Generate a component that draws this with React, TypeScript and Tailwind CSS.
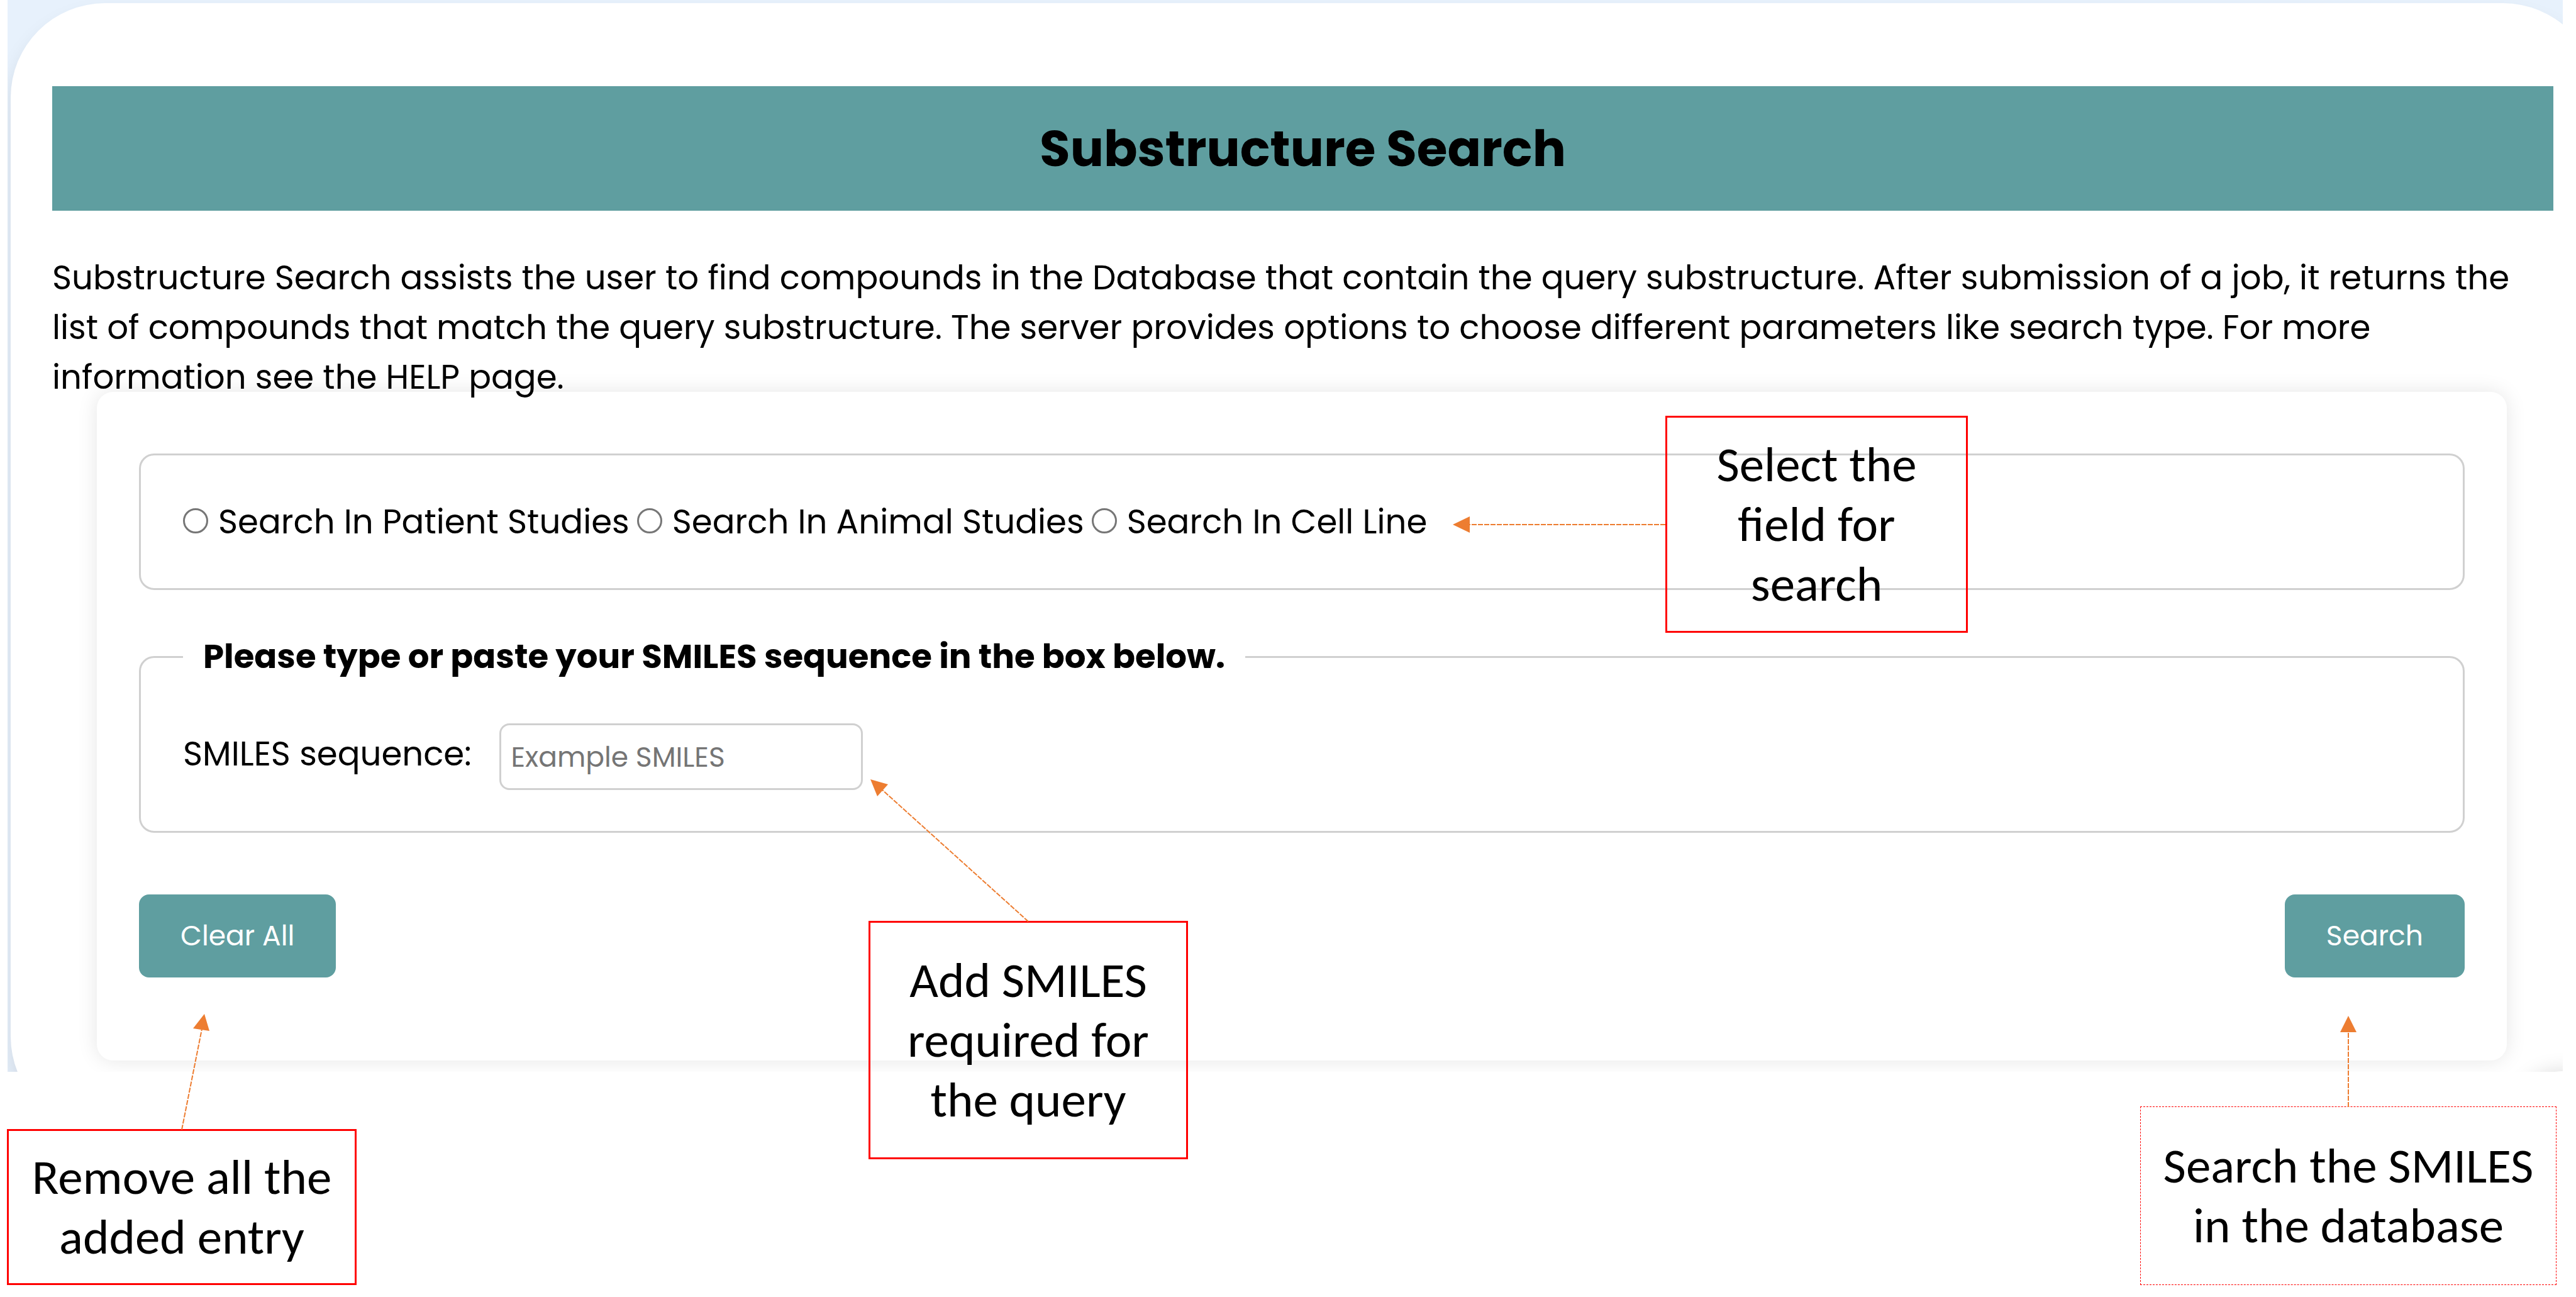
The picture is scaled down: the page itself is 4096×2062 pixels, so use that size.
import type { ReactNode } from "react";

type Point = [number, number];

function Arrow({ className, width, height, from, to, head }: {
  className: string;
  width: number;
  height: number;
  from: Point;
  to: Point;
  head: string;
}) {
  return (
    <svg
      className={`absolute overflow-visible ${className}`}
      width={width}
      height={height}
      viewBox={`0 0 ${width} ${height}`}
      aria-hidden="true"
    >
      <line x1={from[0]} y1={from[1]} x2={to[0]} y2={to[1]} stroke="#ed7d31" strokeWidth="2" strokeDasharray="8 2" />
      <polygon points={head} fill="#ed7d31" />
    </svg>
  );
}

function Note({ className, children }: { className: string; children: ReactNode }) {
  return (
    <div
      className={`text-center font-['Carlito','Calibri','Noto_Sans',sans-serif] text-[79px] leading-[95px] text-black ${className}`}
    >
      {children}
    </div>
  );
}

function Choice({ id, label }: { id: string; label: string }) {
  return (
    <div className="flex items-center gap-4">
      <input
        type="radio"
        id={id}
        name="field"
        className="mb-1 size-10 shrink-0 appearance-none rounded-full border-3 border-[#767676] bg-white checked:border-[12px]"
      />
      <label htmlFor={id}>{label}</label>
    </div>
  );
}

export default function App() {
  return (
    <div className="relative min-h-screen w-full overflow-hidden bg-white font-['Poppins','Inter',sans-serif] text-black">
      <main className="relative mr-[21px] ml-3 overflow-hidden bg-[#e7f1fc] pt-[5px] pl-[5px]">
        <div className="-mr-[55px] -mb-[94px] rounded-[150px] bg-white pt-[132px] pr-[70px] pb-[112px] pl-[66px] shadow-[0_20px_33px_rgba(0,0,0,0.1)]">
          <h1 className="bg-[#5f9ea0] pt-[51px] pb-[49px] text-center text-[79px] leading-[98px] font-bold">
            Substructure Search
          </h1>
          <p className="mt-[67px] text-[53px] leading-[79px]">
            Substructure Search assists the user to find compounds in the Database that contain the query
            substructure. After submission of a job, it returns the list of compounds that match the query
            substructure. The server provides options to choose different parameters like search type. For more
            information see the HELP page.
          </p>

          <form
            className="-mt-4 mr-[74px] ml-[71px] rounded-[26px] px-[67px] pt-[98px] pb-[132px] text-[53px] leading-[66px] shadow-[0_0_33px_rgba(0,0,0,0.1)]"
            onSubmit={(e) => e.preventDefault()}
          >
            <fieldset className="flex items-center gap-3 rounded-3xl border-3 border-[#d0d0d0] px-[67px] pt-[73px] pb-[72px]">
              <Choice id="patient" label="Search In Patient Studies" />
              <Choice id="animal" label="Search In Animal Studies" />
              <Choice id="cell" label="Search In Cell Line" />
            </fieldset>

            <fieldset className="mt-[73px] rounded-3xl border-3 border-[#d0d0d0] px-[67px] pt-[73px] pb-[65px]">
              <legend className="px-8 font-bold">Please type or paste your SMILES sequence in the box below.</legend>
              <div className="flex items-center gap-11">
                <label htmlFor="smiles" className="pb-2">SMILES sequence:</label>
                <input
                  id="smiles"
                  type="text"
                  placeholder="Example SMILES"
                  className="h-[106px] w-[578px] rounded-2xl border-3 border-[#d0d0d0] px-4 text-[44px] placeholder:text-[#757575]"
                />
              </div>
            </fieldset>

            <div className="mt-[98px] flex justify-between text-[44px] text-white">
              <button type="reset" className="rounded-2xl bg-[#5f9ea0] px-[66px] py-[33px]">Clear All</button>
              <button type="submit" className="rounded-2xl bg-[#5f9ea0] px-[66px] py-[33px]">Search</button>
            </div>
          </form>
        </div>
        <div className="absolute -right-[80px] -bottom-[159px] size-40 rounded-full bg-white shadow-[0_0_33px_rgba(0,0,0,0.15)]" />
      </main>

      <div className="flex items-end justify-between pt-[55px] pr-[31px] pl-[11px]">
        <Note className="relative w-[556px] border-3 border-[#ff0000] py-[26px]">
          Remove all the<br />added entry
          <Arrow className="bottom-full left-1/2" width={44} height={186} from={[0, 184]} to={[32, 24]} head="36,0 44,27 18,23" />
        </Note>
        <Note className="relative w-[662px] border border-dashed border-[#ff0000] py-[46px]">
          Search the SMILES<br />in the database
          <Arrow className="bottom-full left-1/2 -translate-x-1/2" width={26} height={145} from={[13, 145]} to={[13, 24]} head="13,0 26,26 0,26" />
        </Note>
      </div>

      <Note className="absolute top-[661px] left-[2648px] w-[481px] border-3 border-[#ff0000] py-[27px]">
        Select the<br />field for<br />search
        <Arrow className="top-1/2 right-full -translate-y-1/2" width={341} height={26} from={[338, 13]} to={[24, 13]} head="0,13 27,0 27,26" />
      </Note>
      <Note className="absolute top-[1464px] left-[1381px] w-[508px] border-3 border-[#ff0000] py-11">
        Add SMILES<br />required for<br />the query
        <Arrow className="right-1/2 bottom-full" width={251} height={228} from={[251, 226]} to={[18, 16]} head="0,0 28,8 11,27" />
      </Note>
    </div>
  );
}
